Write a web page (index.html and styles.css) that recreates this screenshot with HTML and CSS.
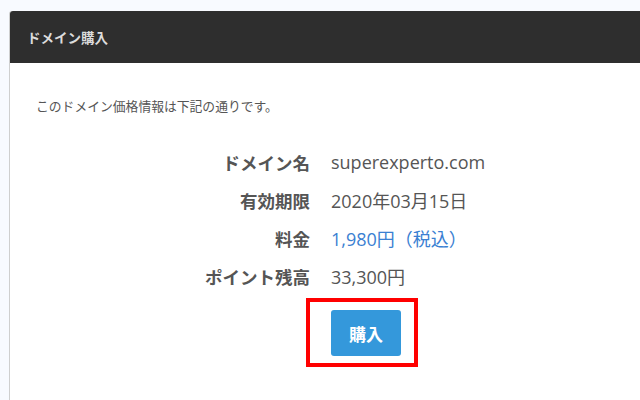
FILE: index.html
```html
<!DOCTYPE html>
<html lang="ja">
<head>
<meta charset="utf-8">
<link rel="stylesheet" href="styles.css">
</head>
<body>
<div class="panel">
  <div class="panel-header">ドメイン購入</div>
  <div class="panel-body">
    <p class="intro">このドメイン価格情報は下記の通りです。</p>
    <div class="info">
      <div class="label">ドメイン名</div>
      <div class="value">superexperto.com</div>
      <div class="label">有効期限</div>
      <div class="value">2020年03月15日</div>
      <div class="label">料金</div>
      <div class="value price">1,980円（税込）</div>
      <div class="label">ポイント残高</div>
      <div class="value">33,300円</div>
      <div class="action">
        <span class="highlight"><button class="buy">購入</button></span>
      </div>
    </div>
  </div>
</div>
</body>
</html>
```
FILE: styles.css
```css
html, body {
  margin: 0;
  padding: 0;
}
body {
  background: #f8faff;
  font-family: "Open Sans", "Noto Sans CJK JP", sans-serif;
  color: #555;
  height: 400px;
  overflow: hidden;
}
.panel {
  margin: 11px 0 0 9px;
  border-left: 1px solid #cfcfcf;
  border-radius: 3px 0 0 0;
  background: #fff;
  height: 389px;
}
.panel-header {
  height: 52px;
  background: #2e2e2e;
  color: #dcdcdc;
  font-family: "Noto Sans CJK JP", sans-serif;
  font-size: 13.5px;
  font-weight: bold;
  line-height: 52px;
  padding-left: 17px;
  border-radius: 3px 0 0 0;
}
.panel-body {
  padding-top: 34px;
}
.intro {
  margin: 0 0 28px 26px;
  font-family: "Noto Sans CJK JP", sans-serif;
  font-size: 12.8px;
  line-height: 18px;
  color: #555;
}
.info {
  display: grid;
  grid-template-columns: 300px auto;
  column-gap: 21px;
  grid-auto-rows: 38px;
  align-items: center;
}
.label {
  text-align: right;
  font-family: "Noto Sans CJK JP", sans-serif;
  font-weight: bold;
  font-size: 17.5px;
  color: #555;
}
.value {
  font-size: 18px;
  color: #555;
}
.price {
  color: #3a80d2;
}
.action {
  grid-column: 2;
  padding-top: 15px;
  height: 46px;
  align-self: start;
}
.highlight {
  position: relative;
  display: inline-block;
}
.highlight::after {
  content: "";
  position: absolute;
  left: -25px;
  top: -12px;
  right: -17px;
  bottom: -11px;
  border: 4px solid #f00;
  pointer-events: none;
}
.buy {
  display: block;
  width: 70px;
  height: 46px;
  border: none;
  border-radius: 3px;
  background: #3498db;
  color: #fff;
  font-family: "Noto Sans CJK JP", sans-serif;
  font-size: 17px;
  font-weight: bold;
  padding: 0;
}
```
